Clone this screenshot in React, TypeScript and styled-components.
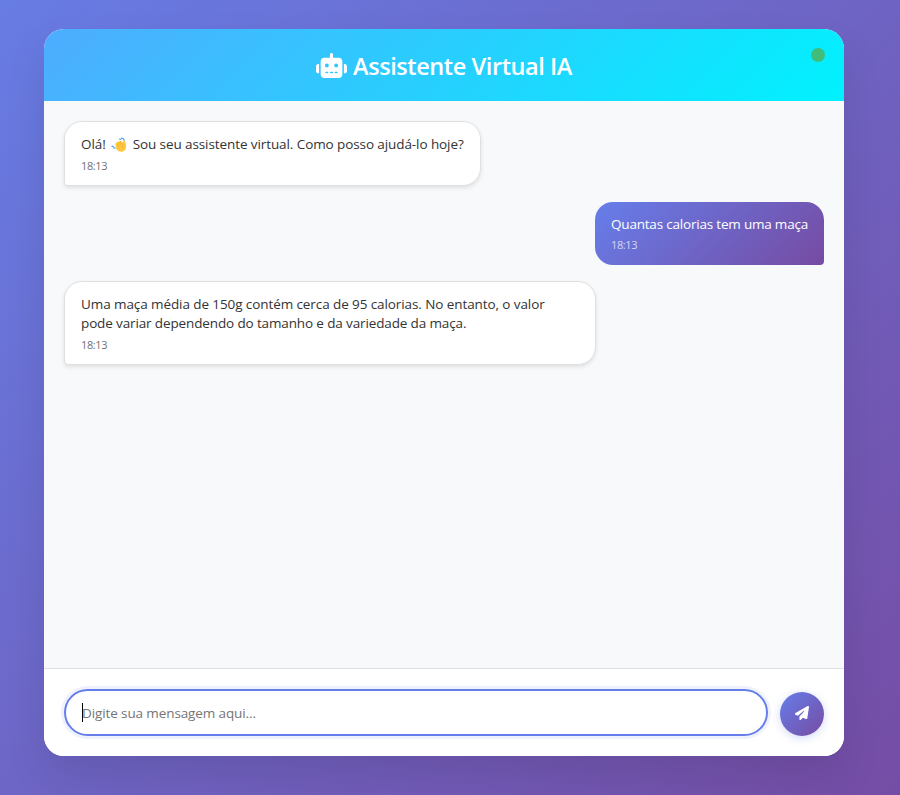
import React from "react";
import styled, { createGlobalStyle } from "styled-components";
import { FaRobot, FaPaperPlane } from "react-icons/fa6";

const GlobalStyle = createGlobalStyle`
  * { box-sizing: border-box; margin: 0; padding: 0; }
  body {
    height: 795px;
    overflow: hidden;
    font-family: "Segoe UI", "Open Sans", "Noto Sans", sans-serif;
    background: linear-gradient(135deg, #677ce4 0%, #754da5 100%);
  }
`;

const Page = styled.main`
  height: 795px;
  padding: 29px 56px 39px 44px;
`;

const Chat = styled.section`
  display: flex;
  flex-direction: column;
  width: 800px;
  height: 727px;
  overflow: hidden;
  border-radius: 20px;
  background: #fff;
  box-shadow: 0 20px 40px rgba(0, 0, 0, 0.1);
`;

const Header = styled.header`
  position: relative;
  display: flex;
  align-items: center;
  justify-content: center;
  flex: 0 0 72px;
  padding-top: 2px;
  color: #fff;
  background: linear-gradient(135deg, #4facfe 0%, #00f2fe 100%);
`;

const Title = styled.h1`
  display: flex;
  align-items: center;
  gap: 6px;
  font-size: 23.5px;
  font-weight: 600;
  line-height: 32px;
  white-space: nowrap;
  letter-spacing: -0.42px;
`;

const RobotIcon = styled(FaRobot)`
  width: 31px;
  height: 25px;
  margin-bottom: 1px;
`;

const Status = styled.span`
  position: absolute;
  top: 19px;
  right: 19px;
  width: 14px;
  height: 14px;
  border-radius: 50%;
  background: #40bd7a;
`;

const Messages = styled.div`
  display: flex;
  flex: 1;
  flex-direction: column;
  gap: 16px;
  padding: 20px;
  background: #f8f9fb;
`;

const Bubble = styled.article<{ $own?: boolean; $width: number }>`
  align-self: ${(p) => (p.$own ? "flex-end" : "flex-start")};
  width: ${(p) => p.$width}px;
  padding: 13px 16px ${(p) => (p.$own ? 12.4 : 11.4)}px;
  border: ${(p) => (p.$own ? "0" : "1px solid #e0e0e0")};
  border-radius: ${(p) => (p.$own ? "18px 18px 4px 18px" : "18px 18px 18px 4px")};
  color: ${(p) => (p.$own ? "#fff" : "#333")};
  background: ${(p) => (p.$own ? "linear-gradient(135deg, #667eea 0%, #764ba2 100%)" : "#fff")};
  box-shadow: ${(p) => (p.$own ? "none" : "0 2px 4px rgba(0, 0, 0, 0.1)")};

  time {
    margin-top: ${(p) => (p.$own ? 3 : 4)}px;
  }
`;

const Line = styled.p<{ $track: number }>`
  display: flex;
  align-items: center;
  font-size: 13.5px;
  line-height: 19.2px;
  white-space: pre;
  letter-spacing: ${(p) => p.$track}px;
`;

const Time = styled.time`
  display: block;
  font-size: 11px;
  line-height: 15.4px;
  letter-spacing: -0.4px;
  opacity: 0.7;
`;

const HandSvg = styled.svg`
  flex: none;
  width: 16px;
  height: 16px;
  margin: 0 6px 0 5px;
`;

const Composer = styled.form`
  display: flex;
  align-items: flex-end;
  gap: 12px;
  flex: 0 0 88px;
  padding: 20px;
  border-top: 1px solid #e0e0e0;
  background: #fff;
`;

const Field = styled.div`
  display: flex;
  flex: 1;
  align-items: center;
  height: 47px;
  padding: 0 16px;
  border: 2px solid #667eea;
  border-radius: 24px;
  color: #757575;
  font-size: 13.5px;
  letter-spacing: -0.11px;
  box-shadow: 0 0 0 3px rgba(102, 126, 234, 0.1);
`;

const Caret = styled.span`
  width: 1px;
  height: 19px;
  margin-right: -1px;
  background: #000;
`;

const Send = styled.button`
  display: flex;
  align-items: center;
  justify-content: center;
  width: 44px;
  height: 44px;
  padding-bottom: 2px;
  border: 0;
  border-radius: 50%;
  color: #fff;
  font-size: 14px;
  background: linear-gradient(135deg, #667eea 0%, #764ba2 100%);
  box-shadow: 0 2px 8px rgba(102, 126, 234, 0.3);
`;

const PlaneIcon = styled(FaPaperPlane)`
  width: 14px;
  height: 14px;
`;

const Hand = () => (
  <HandSvg viewBox="0 0 16 16">
    <g fill="none" stroke="#50a5e6" strokeWidth="1.3" strokeLinecap="round">
      <path d="M10.6 1.2c1.4.1 2.3.9 2.7 2.2M8.6 2.2l1.2.2M1 9.2l1.3.5M2.8 10.8l1 .2" />
    </g>
    <path
      d="M5.2 9 4.4 7.4c-.3-.9.5-1.4 1.2-.8-.5-1.2.5-2 1.4-1.2-.2-1.1 1-1.7 1.8-.8.2-1 1.2-1.2 1.8-.4l1.3 1.6.2-1.3c.2-1.3 1.7-1.2 2 0 .3 1.5 1.2 3.4 1 5.4-.2 3-2.2 4.9-5 4.9-2.4 0-4-1.4-5.2-3.6-.6-1.3-.7-2.1.3-2.2z"
      fill="#ffc83d"
    />
    <path d="m6 7 1.9 2.4M7.5 6l1.9 2.3M9.3 5.2l1.8 2.3M12.4 8c-1.1.6-1.4 1.6-1 2.8" fill="none" stroke="#eda02c" strokeWidth=".6" strokeLinecap="round" />
  </HandSvg>
);

export default function App() {
  return (
    <Page>
      <GlobalStyle />
      <Chat>
        <Header>
          <Title>
            <RobotIcon />
            <span>Assistente Virtual IA</span>
          </Title>
          <Status />
        </Header>
        <Messages>
          <Bubble $width={417}>
            <Line $track={-0.09}>
              <span>Olá!</span>
              <Hand />
              <span>Sou seu assistente virtual. Como posso ajudá-lo hoje?</span>
            </Line>
            <Time>18:13</Time>
          </Bubble>
          <Bubble $own $width={229}>
            <Line $track={-0.2}>Quantas calorias tem uma maça</Line>
            <Time>18:13</Time>
          </Bubble>
          <Bubble $width={532}>
            <Line $track={-0.09}>Uma maça média de 150g contém cerca de 95 calorias. No entanto, o valor</Line>
            <Line $track={-0.13}>pode variar dependendo do tamanho e da variedade da maça.</Line>
            <Time>18:13</Time>
          </Bubble>
        </Messages>
        <Composer>
          <Field>
            <Caret />
            Digite sua mensagem aqui...
          </Field>
          <Send type="button" aria-label="Enviar">
            <PlaneIcon />
          </Send>
        </Composer>
      </Chat>
    </Page>
  );
}
